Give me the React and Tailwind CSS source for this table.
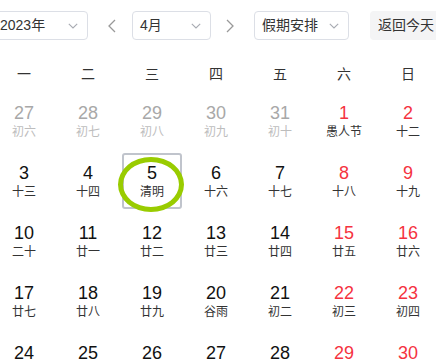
import React from "react";

const FONT = { fontFamily: '"Liberation Sans", Arial, "Noto Sans CJK SC", sans-serif' };

const weeks = [
  [["27","初六","g"],["28","初七","g"],["29","初八","g"],["30","初九","g"],["31","初十","g"],["1","愚人节","r"],["2","十二","r"]],
  [["3","十三",""],["4","十四",""],["5","清明","s"],["6","十六",""],["7","十七",""],["8","十八","r"],["9","十九","r"]],
  [["10","二十",""],["11","廿一",""],["12","廿二",""],["13","廿三",""],["14","廿四",""],["15","廿五","r"],["16","廿六","r"]],
  [["17","廿七",""],["18","廿八",""],["19","廿九",""],["20","谷雨",""],["21","初二",""],["22","初三","r"],["23","初四","r"]],
  [["24","初五",""],["25","初六",""],["26","初七",""],["27","初八",""],["28","初九",""],["29","初十","r"],["30","十一","r"]],
];

const Down = () => (
  <svg width="10" height="6" viewBox="0 0 10 6" fill="none">
    <path d="M0.8 0.8 L5 5 L9.2 0.8" stroke="#a8abb2" strokeWidth="1.1" />
  </svg>
);

function Select({ label, className }) {
  return (
    <div className={"shrink-0 h-[29px] border border-[#dcdfe6] rounded-[4px] bg-white flex items-center justify-between pl-[7px] pr-[9px] text-[14px] text-[#333] " + className}>
      <span>{label}</span>
      <Down />
    </div>
  );
}

export default function App() {
  return (
    <div className="w-[436px] h-[363px] overflow-hidden bg-white relative" style={FONT}>
      <div className="flex items-center pt-[11px] h-[40px]">
        <Select label="2023年" className="ml-[-8px] w-[96px]" />
        <div className="shrink-0 ml-[20px] w-[8px] flex justify-center">
          <svg width="8" height="14" viewBox="0 0 8 14" fill="none">
            <path d="M7 1 L1 7 L7 13" stroke="#999" strokeWidth="1.3" />
          </svg>
        </div>
        <Select label="4月" className="ml-[16px] w-[79px]" />
        <div className="shrink-0 ml-[15px] w-[8px] flex justify-center">
          <svg width="8" height="14" viewBox="0 0 8 14" fill="none">
            <path d="M1 1 L7 7 L1 13" stroke="#999" strokeWidth="1.3" />
          </svg>
        </div>
        <Select label="假期安排" className="ml-[20px] w-[95px]" />
        <div className="ml-[21px] h-[29px] w-[76px] shrink-0 rounded-[4px] bg-[#f4f4f5] flex items-center pl-[8px] text-[14px] text-[#333]">
          返回今天
        </div>
      </div>
      <div className="ml-[-8px] w-[448px]">
        <div className="grid grid-cols-7 h-[34px] mt-[17px] items-center text-[14px] text-[#333]">
          {["一","二","三","四","五","六","日"].map((d) => (
            <div key={d} className="text-center">{d}</div>
          ))}
        </div>
        {weeks.map((w, i) => (
          <div key={i} className="grid grid-cols-7 h-[60px]">
            {w.map(([n, l, t], j) => {
              const numColor = t === "g" ? "text-[#a8a8a8]" : t === "r" ? "text-[#f5333f]" : "text-[#111]";
              const lunColor = t === "g" ? "text-[#bdbdbd]" : "text-[#333]";
              return (
                <div key={j} className="relative flex flex-col items-center justify-center">
                  {t === "s" && (
                    <>
                      <div className="absolute left-[2px] top-[2px] w-[60px] h-[56px] border-2 border-[#c0c4cc] rounded-[3px]" />
                      <div className="absolute left-[-2px] top-[6px] w-[66px] h-[55px] border-[5px] border-[#99cc00] rounded-[50%]" />
                    </>
                  )}
                  <div className={"relative text-[18px] leading-[22px] " + numColor}>{n}</div>
                  <div className={"relative text-[12px] leading-[16px] " + lunColor}>{l}</div>
                </div>
              );
            })}
          </div>
        ))}
      </div>
    </div>
  );
}
